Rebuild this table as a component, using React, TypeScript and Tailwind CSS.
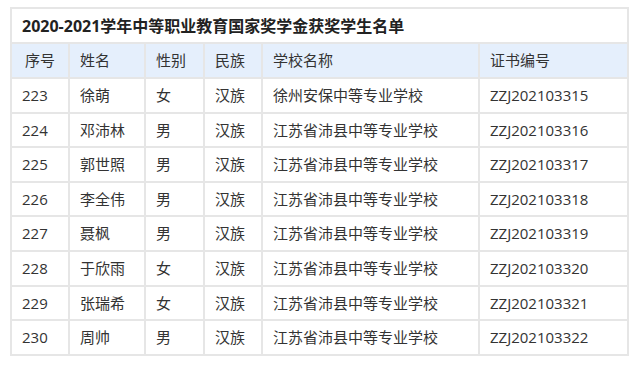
const rows = [
  ['223', '徐萌', '女', '汉族', '徐州安保中等专业学校', 'ZZJ202103315'],
  ['224', '邓沛林', '男', '汉族', '江苏省沛县中等专业学校', 'ZZJ202103316'],
  ['225', '郭世照', '男', '汉族', '江苏省沛县中等专业学校', 'ZZJ202103317'],
  ['226', '李全伟', '男', '汉族', '江苏省沛县中等专业学校', 'ZZJ202103318'],
  ['227', '聂枫', '男', '汉族', '江苏省沛县中等专业学校', 'ZZJ202103319'],
  ['228', '于欣雨', '女', '汉族', '江苏省沛县中等专业学校', 'ZZJ202103320'],
  ['229', '张瑞希', '女', '汉族', '江苏省沛县中等专业学校', 'ZZJ202103321'],
  ['230', '周帅', '男', '汉族', '江苏省沛县中等专业学校', 'ZZJ202103322'],
]

const heads = ['序号', '姓名', '性别', '民族', '学校名称', '证书编号']
const widths = ['w-[58px]', 'w-[76px]', 'w-[59px]', 'w-[58px]', 'w-[217px]', 'w-[149px]']

export default function App() {
  return (
    <div className="bg-white w-[641px] h-[372px] pl-[10px] pt-[7px]" style={{ fontFamily: '"Open Sans", "Noto Sans CJK SC", sans-serif' }}>
      <table className="border-collapse w-[617px] table-fixed text-[15px] text-[#333]">
        <colgroup>
          {widths.map((w, i) => <col key={i} className={w} />)}
        </colgroup>
        <tbody>
          <tr className="h-[35px]">
            <td colSpan={6} className="border-2 border-[#e6e6e6] px-[10px] text-[16px] font-bold text-[#222]">
              2020-2021学年中等职业教育国家奖学金获奖学生名单
            </td>
          </tr>
          <tr className="h-[35px] bg-[#e5effc]">
            {heads.map((h, i) => (
              <td key={i} className={`border-2 border-[#e6e6e6] px-[10px] ${i === 0 ? 'text-center' : ''}`}>{h}</td>
            ))}
          </tr>
          {rows.map((r) => (
            <tr key={r[0]} className="h-[34.6px]">
              {r.map((c, i) => (
                <td key={i} className="border-2 border-[#e6e6e6] px-[10px]">{c}</td>
              ))}
            </tr>
          ))}
        </tbody>
      </table>
    </div>
  )
}
